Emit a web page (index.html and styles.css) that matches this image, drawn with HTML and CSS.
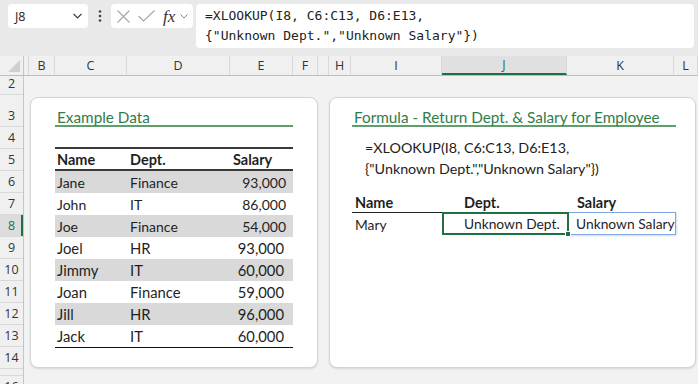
FILE: index.html
```html
<!DOCTYPE html>
<html lang="en">
<head>
    <meta charset="UTF-8">
    <title>XLOOKUP - Unknown Dept. &amp; Salary</title>
    <link rel="stylesheet" href="styles.css">
</head>
<body>
    <div class="app">
        <div class="topbar">
            <div class="namebox">
                <span>J8</span>
                <svg width="9" height="6" viewBox="0 0 9 6"><polyline points="0.5,0.8 4.5,4.8 8.5,0.8" fill="none" stroke="#333" stroke-width="1.2"/></svg>
            </div>
            <div class="dots">
                <svg width="4" height="12" viewBox="0 0 4 12"><circle cx="2" cy="1.5" r="1.3" fill="#444"/><circle cx="2" cy="6" r="1.3" fill="#444"/><circle cx="2" cy="10.5" r="1.3" fill="#444"/></svg>
            </div>
            <div class="fxbox">
                <svg class="ico-x" width="13" height="13" viewBox="0 0 13 13"><path d="M0.5 0.5 L12.5 12.5 M12.5 0.5 L0.5 12.5" stroke="#a6a6a6" stroke-width="1.1" fill="none"/></svg>
                <svg class="ico-ok" width="17" height="12" viewBox="0 0 17 12"><polyline points="0.5,6 5.5,11 16.5,0.5" fill="none" stroke="#a6a6a6" stroke-width="1.1"/></svg>
                <span class="fx">fx</span>
                <svg class="ico-dd" width="8" height="5" viewBox="0 0 8 5"><polyline points="0.5,0.5 4,4 7.5,0.5" fill="none" stroke="#888" stroke-width="1"/></svg>
            </div>
            <div class="formula">=XLOOKUP(I8, C6:C13, D6:E13,<br>{"Unknown Dept.","Unknown Salary"})</div>
        </div>

        <div class="colheads">
            <div class="ch corner">
                <svg width="12" height="12" viewBox="0 0 12 12"><polygon points="12,0 12,12 0,12" fill="#cfcfcf"/></svg>
            </div>
            <div class="ch"></div>
            <div class="ch">B</div>
            <div class="ch">C</div>
            <div class="ch">D</div>
            <div class="ch">E</div>
            <div class="ch">F</div>
            <div class="ch"></div>
            <div class="ch">H</div>
            <div class="ch">I</div>
            <div class="ch ch-active">J</div>
            <div class="ch">K</div>
            <div class="ch">L</div>
        </div>

        <div class="sheet">
            <div class="rowheads">
                <div class="rh rh-short">2</div>
                <div class="rh rh-tall">3</div>
                <div class="rh">4</div>
                <div class="rh">5</div>
                <div class="rh">6</div>
                <div class="rh">7</div>
                <div class="rh rh-active">8</div>
                <div class="rh">9</div>
                <div class="rh">10</div>
                <div class="rh">11</div>
                <div class="rh">12</div>
                <div class="rh">13</div>
                <div class="rh">14</div>
                <div class="rh rh-tiny"></div>
                <div class="rh">16</div>
            </div>

            <div class="canvas">
                <div class="card card-left">
                    <div class="card-title">Example Data</div>
                    <div class="tbl">
                        <div class="tr th">
                            <div>Name</div><div>Dept.</div><div>Salary</div>
                        </div>
                        <div class="tr band"><div>Jane</div><div>Finance</div><div class="num">93,000</div></div>
                        <div class="tr"><div>John</div><div>IT</div><div class="num">86,000</div></div>
                        <div class="tr band"><div>Joe</div><div>Finance</div><div class="num">54,000</div></div>
                        <div class="tr big"><div>Joel</div><div>HR</div><div class="num">93,000</div></div>
                        <div class="tr band big"><div>Jimmy</div><div>IT</div><div class="num">60,000</div></div>
                        <div class="tr big"><div>Joan</div><div>Finance</div><div class="num">59,000</div></div>
                        <div class="tr band big"><div>Jill</div><div>HR</div><div class="num">96,000</div></div>
                        <div class="tr big last"><div>Jack</div><div>IT</div><div class="num">60,000</div></div>
                    </div>
                </div>

                <div class="card card-right">
                    <div class="card-title">Formula - Return Dept. &amp; Salary for Employee</div>
                    <div class="note">=XLOOKUP(I8, C6:C13, D6:E13,<br>{"Unknown Dept.","Unknown Salary"})</div>
                    <div class="result">
                        <div class="rr rr-head">
                            <div class="c-name">Name</div>
                            <div class="c-dept">Dept.</div>
                            <div class="c-sal">Salary</div>
                        </div>
                        <div class="rr">
                            <div class="c-name">Mary</div>
                            <div class="c-dept sel">Unknown Dept.<span class="handle"></span></div>
                            <div class="c-sal spill">Unknown Salary</div>
                        </div>
                    </div>
                </div>
            </div>
        </div>
    </div>
</body>
</html>
```

FILE: styles.css
```css
:root {
    --bar-bg: #e9e9e9;
    --head-bg: #f0f0f0;
    --sheet-bg: #f2f2f2;
    --line: #d9d9d9;
    --excel-green: #1e7145;
    --title-green: #2f7d4a;
    --band: #d9d9d9;
    --text: #1f1f1f;
}

* {
    box-sizing: border-box;
}

body {
    margin: 0;
    font-family: Lato, "Noto Sans", sans-serif;
    color: var(--text);
    background: var(--sheet-bg);
}

.app {
    width: 698px;
    height: 384px;
    overflow: hidden;
}

/* formula bar */
.topbar {
    height: 56px;
    background: var(--bar-bg);
    display: flex;
    align-items: flex-start;
    padding: 4px 0 0 8px;
}

.namebox {
    width: 80px;
    height: 24px;
    background: #fff;
    border-radius: 4px;
    display: flex;
    align-items: center;
    justify-content: space-between;
    padding: 0 6px 0 7px;
    font-family: "Open Sans", sans-serif;
    font-size: 12.5px;
    color: #222;
}

.dots {
    width: 23px;
    height: 24px;
    display: flex;
    align-items: center;
    justify-content: center;
}

.fxbox {
    width: 82px;
    height: 24px;
    background: #fff;
    border-radius: 4px;
    display: flex;
    align-items: center;
    padding-left: 6px;
}

.ico-x { margin-right: 8px; }
.ico-ok { margin-right: 8px; }

.fx {
    font-family: "Liberation Serif", serif;
    font-style: italic;
    font-size: 17px;
    color: #333;
    margin-right: 5px;
    line-height: 1;
}

.formula {
    margin-left: 3px;
    width: 498px;
    height: 44px;
    background: #fff;
    border-radius: 4px;
    padding: 2px 0 0 9px;
    font-family: "DejaVu Sans Mono", monospace;
    font-size: 13px;
    line-height: 20px;
    color: #222;
    white-space: nowrap;
}

/* column headers */
.colheads {
    display: grid;
    grid-template-columns: 24px 5px 26px 72px 103px 63px 25px 11px 22px 91px 125px 107px 1fr;
    height: 20px;
    background: var(--head-bg);
    border-bottom: 1px solid #bdbdbd;
}

.ch {
    border-right: 1px solid var(--line);
    display: flex;
    align-items: center;
    justify-content: center;
    font-family: "Open Sans", sans-serif;
    font-size: 12.5px;
    color: #333;
}

.corner {
    align-items: flex-end;
    justify-content: flex-end;
    padding: 0 3px 3px 0;
    border-right: 1px solid #c6c6c6;
}

.ch-active {
    background: #e0e0e0;
    color: var(--excel-green);
    border-bottom: 2px solid var(--excel-green);
}

/* sheet */
.sheet {
    display: flex;
    height: 308px;
}

.rowheads {
    width: 24px;
    flex: none;
    background: var(--head-bg);
    border-right: 1px solid #c6c6c6;
}

.rh {
    height: 22px;
    border-bottom: 1px solid var(--line);
    display: flex;
    align-items: flex-end;
    justify-content: center;
    padding-bottom: 3px;
    font-family: "Open Sans", sans-serif;
    font-size: 12.5px;
    line-height: 15px;
    color: #333;
}

.rh-short { height: 19px; }
.rh-tall { height: 32px; }
.rh-tiny { height: 7px; padding: 0; }

.rh-active {
    background: #dcdcdc;
    color: var(--excel-green);
    box-shadow: inset -2px 0 0 var(--excel-green);
}

.canvas {
    flex: 1;
    display: flex;
    gap: 11px;
    align-items: flex-start;
    padding: 21px 0 0 6px;
}

.card {
    height: 271px;
    background: #fff;
    border: 1px solid #d4d4d4;
    border-radius: 8px;
    box-shadow: 0 1px 2px rgba(0, 0, 0, 0.12);
}

.card-left {
    width: 288px;
    padding-left: 24px;
}

.card-right {
    width: 367px;
    padding-left: 22px;
}

.card-title {
    height: 29px;
    padding: 9px 0 0 2px;
    font-size: 15.3px;
    line-height: 20px;
    color: var(--title-green);
    border-bottom: 2px solid #5e9f6b;
    white-space: nowrap;
}

.card-left .card-title { width: 238px; }
.card-right .card-title { width: 324px; }

/* example data */
.tbl {
    width: 238px;
    margin-top: 20px;
    border-top: 2px solid #3a3a3a;
}

.tr {
    display: grid;
    grid-template-columns: 72px 103px 63px;
    height: 22px;
    align-items: center;
    padding-left: 3px;
    font-size: 14px;
}

.tr > div:first-child { margin-left: -1px; }

.tr.big { font-size: 14.8px; }

.th {
    height: 22px;
    font-size: 14.5px;
    font-weight: bold;
    border-bottom: 2px solid #3a3a3a;
}

.band { background: var(--band); }

.num {
    text-align: right;
    padding-right: 10px;
}

.big .num { padding-right: 12px; }

.last { border-bottom: 1px solid #111; height: 23px; }

/* formula result */
.note {
    margin: 10px 0 0 13px;
    font-size: 14.3px;
    line-height: 21px;
    color: #222;
    white-space: nowrap;
}

.result {
    margin-top: 13px;
    width: 324px;
}

.rr {
    display: grid;
    grid-template-columns: 90px 127px 107px;
    height: 22px;
    font-size: 13.8px;
}

.rr > div {
    display: flex;
    align-items: center;
    padding-left: 3px;
    white-space: nowrap;
}

.rr-head {
    height: 21px;
    font-size: 14.5px;
    font-weight: bold;
    border-bottom: 1px solid #222;
}

.rr-head .c-dept { padding-left: 22px; }
.rr-head .c-sal { padding-left: 8px; }

.sel {
    position: relative;
    border: 2px solid var(--excel-green);
    padding-left: 20px !important;
    margin-top: -1px;
    height: 23px;
}

.handle {
    position: absolute;
    right: -4px;
    bottom: -4px;
    width: 6px;
    height: 6px;
    background: var(--excel-green);
    border: 1px solid #fff;
}

.spill {
    border: 1px solid #7ea6e0;
    border-left: none;
    margin-top: -1px;
    height: 23px;
    padding-left: 7px !important;
    box-shadow: 1px 1px 2px rgba(80, 120, 200, 0.25);
}
```
